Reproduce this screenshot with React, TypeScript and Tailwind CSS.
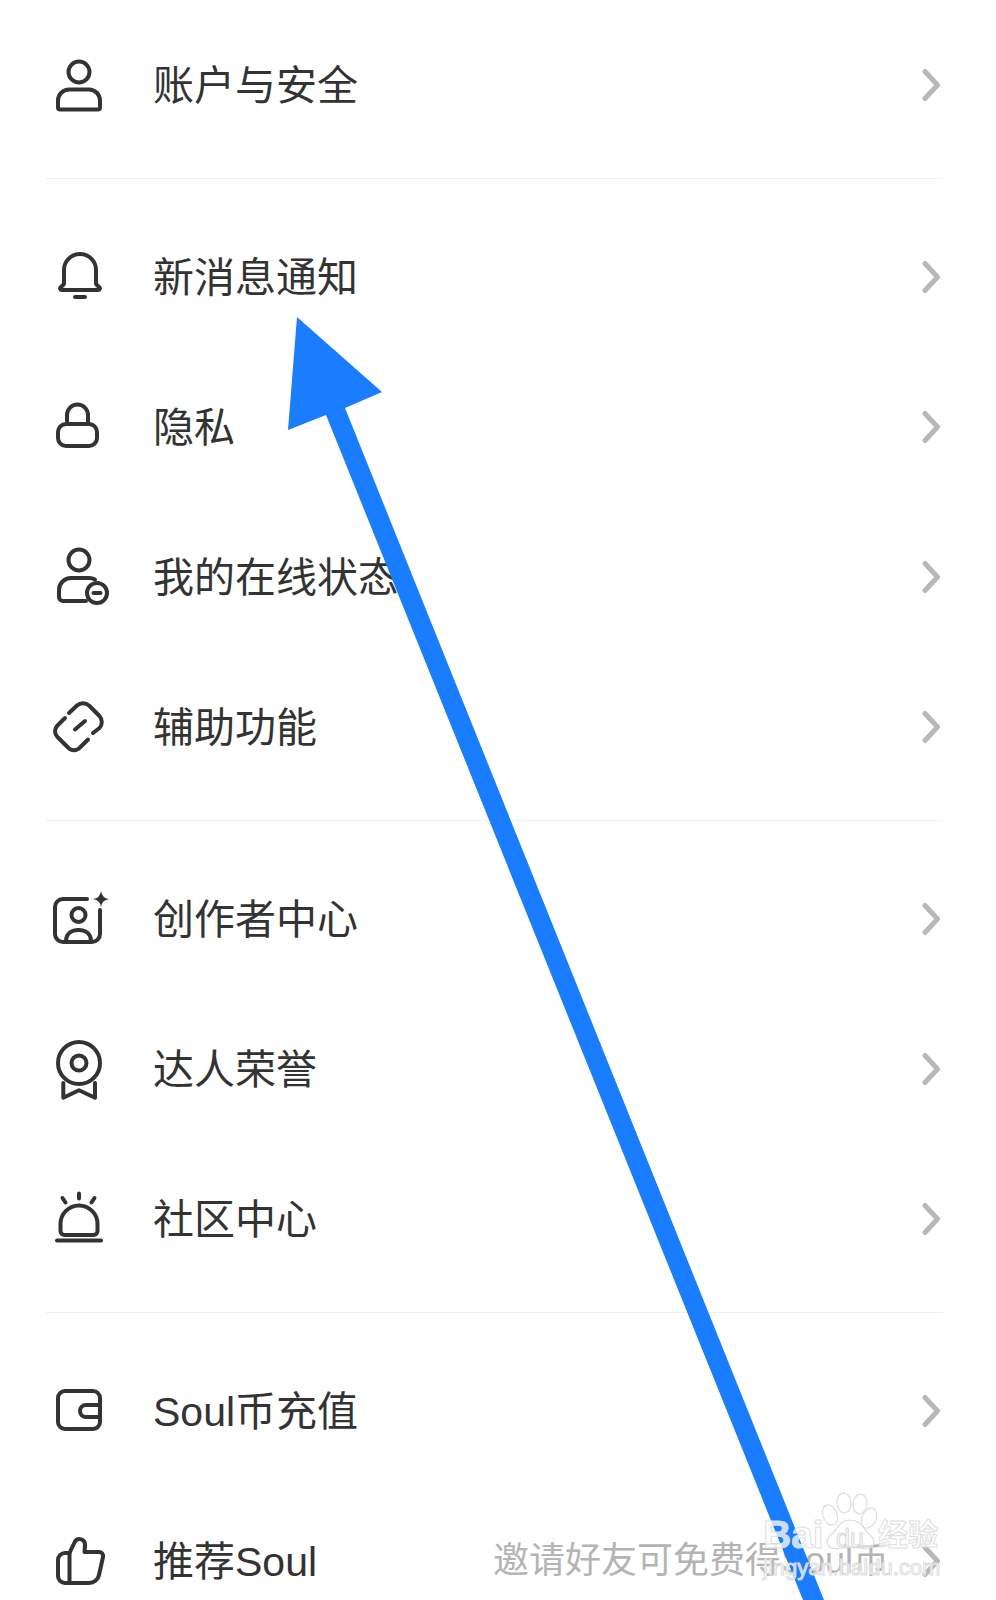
type Row = { label: string; icon: React.ReactNode; hint?: string };

const icons = {
  user: (
    <>
      <circle cx="33" cy="19" r="10.5" />
      <path d="M14 56.5h38a2 2 0 0 0 2-2v-7a11 11 0 0 0-11-11H23a11 11 0 0 0-11 11v7a2 2 0 0 0 2 2z" />
    </>
  ),
  bell: (
    <>
      <path d="M18 39V25a16 16 0 0 1 32 0v14l3 3a1.6 1.6 0 0 1-1 3H16a1.6 1.6 0 0 1-1-3z" />
      <path d="M29 52h10" />
    </>
  ),
  lock: (
    <>
      <rect x="12" y="29" width="39" height="22" rx="8" />
      <path d="M21 28v-8a10.5 10.5 0 0 1 21 0v8" />
    </>
  ),
  status: (
    <>
      <circle cx="33" cy="15" r="10.5" />
      <path d="M40 56H17a4 4 0 0 1-4-4v-7a12 12 0 0 1 12-12h18a12 12 0 0 1 6 1.500" />
      <circle cx="51" cy="48" r="10" />
      <path d="M47.500 48h7" />
    </>
  ),
  link: (
    <>
      <path d="M23 18l8-7.500a9 9 0 0 1 12 0L53.500 21a9 9 0 0 1 0 12L47 38" />
      <path d="M19 23l-7.500 7.500a8 8 0 0 0 0 11.500L22 52.500a8 8 0 0 0 12 0l8-8" />
      <path d="M29 34.500l10-8.500" />
    </>
  ),
  creator: (
    <>
      <path d="M41 12H17a8 8 0 0 0-8 8v27a8 8 0 0 0 8 8h29a8 8 0 0 0 8-8V23" />
      <circle cx="32.500" cy="28" r="7" />
      <path d="M20 54c0-8 6-11 12.500-11S45 46 45 54" />
      <path d="M55 4q1 7 8 8q-7 1-8 8q-1-7-8-8q7-1 8-8z" fill="#333" stroke="none" />
    </>
  ),
  medal: (
    <>
      <circle cx="33" cy="26" r="21" />
      <circle cx="33" cy="26" r="7.500" />
      <path d="M17.300 46v14.700L33 53.300l16 7.400V46" />
    </>
  ),
  siren: (
    <>
      <path d="M14.500 44v-7a18.500 18.500 0 0 1 37 0v7a4 4 0 0 1-4 4h-29a4 4 0 0 1-4-4z" />
      <path d="M11 53.500h44" />
      <path d="M33 6.500v5M16.500 11l3 4.500M48.500 11l-3 4.500" />
    </>
  ),
  wallet: (
    <>
      <rect x="12" y="12" width="42" height="38" rx="7" />
      <path d="M54 26H40a6 6 0 0 0 0 12h14" />
    </>
  ),
  thumb: (
    <>
      <path d="M23.500 24H19a7 7 0 0 0-7 7v16a7 7 0 0 0 7 7h24a10 10 0 0 0 10-8l4-18a4 4 0 0 0-4-5H38.500l.5-7a5.500 5.500 0 0 0-10-3.500L23.500 24z" />
      <path d="M23.500 24v30" />
    </>
  ),
};

const groups: Row[][] = [
  [{ label: "账户与安全", icon: icons.user }],
  [
    { label: "新消息通知", icon: icons.bell },
    { label: "隐私", icon: icons.lock },
    { label: "我的在线状态", icon: icons.status },
    { label: "辅助功能", icon: icons.link },
  ],
  [
    { label: "创作者中心", icon: icons.creator },
    { label: "达人荣誉", icon: icons.medal },
    { label: "社区中心", icon: icons.siren },
  ],
  [
    { label: "Soul币充值", icon: icons.wallet },
    { label: "推荐Soul", icon: icons.thumb, hint: "邀请好友可免费得Soul币" },
  ],
];

function SettingRow({ row }: { row: Row }) {
  return (
    <div className="flex h-[150px] shrink-0 items-center">
      <svg viewBox="0 0 64 64" fill="none" stroke="#333" strokeWidth="4" strokeLinecap="round" strokeLinejoin="round" className="h-[64px] w-[64px] shrink-0 overflow-visible">
        {row.icon}
      </svg>
      <span className="ml-[43px] pt-[4px] text-[41px] text-[#333]">{row.label}</span>
      {row.hint && <span className="ml-auto mr-[32px] text-[36px] text-[#b4b4b4]">{row.hint}</span>}
      <svg viewBox="0 0 20 34" fill="none" stroke="#b8b8b8" strokeWidth="5" strokeLinecap="round" strokeLinejoin="round" className={`mr-[2px] h-[34px] w-[20px] shrink-0 ${row.hint ? "" : "ml-auto"}`}>
        <path d="M4 3.500L16.500 17 4 30.500" />
      </svg>
    </div>
  );
}

export default function App() {
  return (
    <div className="relative h-[1600px] w-[996px] overflow-hidden bg-white font-['Liberation_Sans','Noto_Sans_CJK_SC',sans-serif]">
      <div className="flex flex-col pl-[46px] pr-[53px] pt-[10px]">
        {groups.map((group, index) => (
          <div key={index}>
            {index > 0 && <div className="mb-[23px] mt-[18px] h-[1px] bg-[#f0f0f0]" />}
            {group.map((row) => <SettingRow key={row.label} row={row} />)}
          </div>
        ))}
      </div>

      {/* annotation arrow drawn over the screenshot */}
      <svg viewBox="0 0 996 1600" className="absolute left-0 top-0 h-[1600px] w-[996px]">
        <path d="M297 317L382 392 345 408 824 1600H803L326 415 288 430z" fill="#197dfe" />
      </svg>

      {/* baidu jingyan watermark */}
      <div className="absolute left-[760px] top-[1490px] h-[100px] w-[210px]">
        <svg viewBox="0 0 210 100" fill="#ffffff" fillOpacity="0.45" stroke="#dcdcdc" strokeWidth="1.200" className="absolute left-0 top-0 h-[100px] w-[210px]">
          <ellipse cx="70" cy="25" rx="7" ry="10.500" transform="rotate(-20 70 25)" />
          <ellipse cx="84" cy="13" rx="7" ry="10" transform="rotate(-6 84 13)" />
          <ellipse cx="100" cy="14" rx="7" ry="10" transform="rotate(8 100 14)" />
          <ellipse cx="109" cy="28" rx="7" ry="10.500" transform="rotate(22 109 28)" />
          <path d="M90 30c-10 0-12 8-17 13-5 4-7 8-5 12 2 4 8 4 14 3 6-1 11-1 17 0 6 1 12 1 14-3 2-4 0-8-5-12-5-5-7-13-18-13z" />
        </svg>
        <span className="absolute left-[3px] top-[25px] text-[39px] font-bold leading-none [-webkit-text-stroke:1px_#dedede] [color:rgba(255,255,255,0.75)]">Bai</span>
        <span className="absolute left-[76px] top-[36px] text-[25px] leading-none [-webkit-text-stroke:1px_#d8d8d8] [color:rgba(255,255,255,0.6)]">du</span>
        <span className="absolute left-[118px] top-[30px] text-[30px] font-bold leading-none [-webkit-text-stroke:1px_#dedede] [color:rgba(255,255,255,0.75)]">经验</span>
        <span className="absolute left-[3px] top-[67px] text-[22px] leading-none [-webkit-text-stroke:1px_#dcdcdc] [color:rgba(255,255,255,0.75)]">jingyan.baidu.com</span>
      </div>
    </div>
  );
}
